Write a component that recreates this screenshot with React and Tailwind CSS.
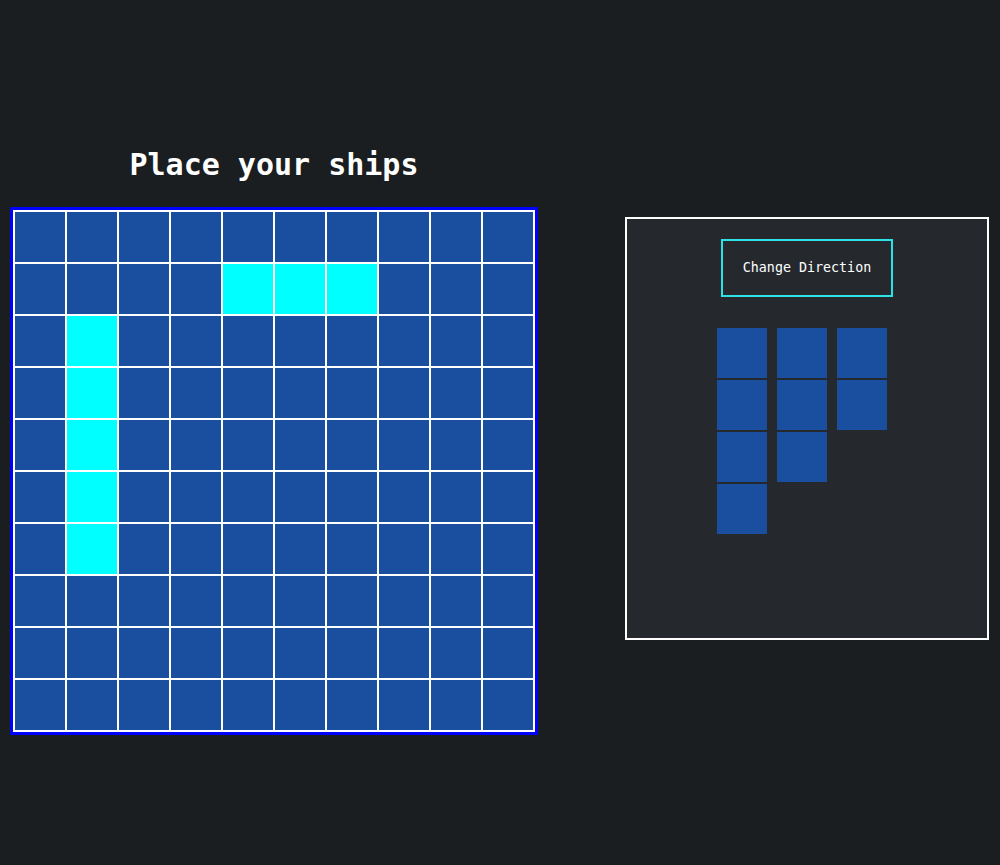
import React from 'react';

const mono = { fontFamily: '"DejaVu Sans Mono", "Liberation Mono", monospace' };

const placed = [
  [1, 4], [1, 5], [1, 6],
  [2, 1], [3, 1], [4, 1], [5, 1], [6, 1]
];

function isPlaced(r, c) {
  return placed.some(([pr, pc]) => pr === r && pc === c);
}

function Board() {
  const cells = [];
  for (let r = 0; r < 10; r++) {
    for (let c = 0; c < 10; c++) {
      cells.push(
        <div
          key={`${r}-${c}`}
          className={
            'w-[52px] h-[52px] border border-white ' +
            (isPlaced(r, c) ? 'bg-[#00ffff]' : 'bg-[#1a4fa0]')
          }
        />
      );
    }
  }
  return (
    <div className="border-[3px] border-[#0000ff]">
      <div className="border border-white grid grid-cols-10 w-[522px]">
        {cells}
      </div>
    </div>
  );
}

function Ship({ length }) {
  return (
    <div className="flex flex-col gap-[2px]">
      {Array.from({ length }).map((_, i) => (
        <div key={i} className="w-[50px] h-[50px] bg-[#1a4fa0]" />
      ))}
    </div>
  );
}

export default function App() {
  return (
    <div className="w-full h-[865px] bg-[#1b1e21] flex items-start pl-[10px]" style={mono}>

      {/* BOARD */}

      <div className="flex flex-col items-center pt-[147px]">
        <h1 className="text-[30px] leading-[36px] font-bold text-white mb-[24px]">
          Place your ships
        </h1>
        <Board />
      </div>

      {/* SHIP PANEL */}

      <div className="ml-[87px] mt-[217px] w-[364px] h-[423px] border-2 border-white bg-[#25292e] flex flex-col items-center pt-[20px]">
        <button className="w-[172px] h-[58px] border-2 border-[#2de2e6] text-white text-[13.333px] bg-transparent">
          Change Direction
        </button>

        <div className="flex gap-[10px] mt-[31px] self-start ml-[90px]">
          <Ship length={4} />
          <Ship length={3} />
          <Ship length={2} />
        </div>
      </div>

    </div>
  );
}
